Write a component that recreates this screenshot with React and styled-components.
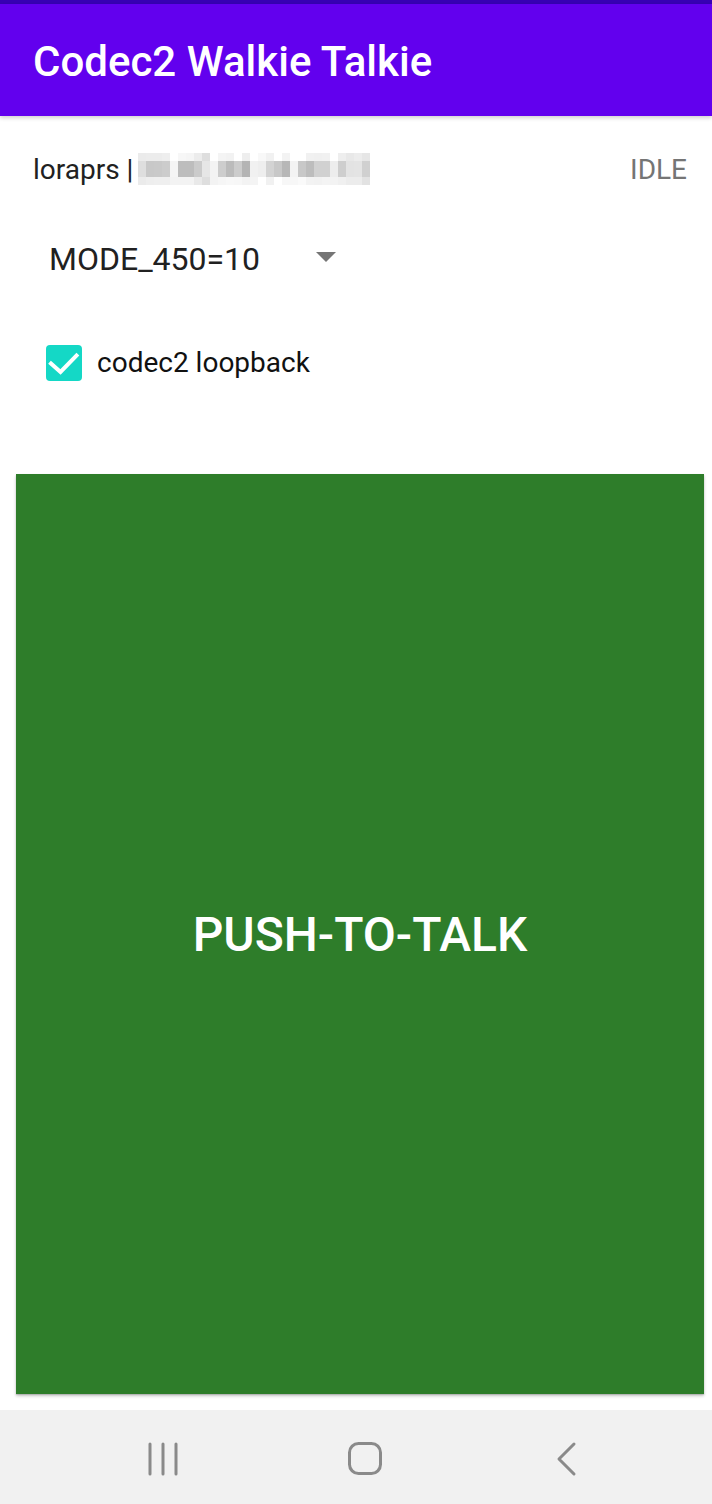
import React from "react";
import styled, { createGlobalStyle } from "styled-components";

const GlobalStyle = createGlobalStyle`
  html, body { margin: 0; padding: 0; background: #ffffff; }
  body { font-family: Roboto, "Noto Sans", "Liberation Sans", sans-serif; }
  * { box-sizing: border-box; }
`;

const Screen = styled.div`
  width: 712px;
  height: 1504px;
  display: flex;
  flex-direction: column;
  background: #ffffff;
  overflow: hidden;
`;

const StatusStrip = styled.div`
  height: 4px;
  background: #3700b3;
  flex: none;
`;

const Toolbar = styled.header`
  height: 112px;
  flex: none;
  background: #6200ee;
  display: flex;
  align-items: center;
  padding: 3px 0 0 33px;
  box-shadow: 0 2px 4px rgba(0, 0, 0, 0.18);
  position: relative;
  z-index: 1;
`;

const Title = styled.h1`
  margin: 0;
  font-family: Roboto, sans-serif;
  font-weight: 500;
  font-size: 42px;
  line-height: 1;
  color: #ffffff;
`;

const Content = styled.main`
  flex: 1;
  display: flex;
  flex-direction: column;
  padding: 0 25px 0 33px;
`;

const StatusRow = styled.div`
  height: 106px;
  display: flex;
  align-items: center;
  justify-content: space-between;
  padding-top: 2px;
`;

const DeviceInfo = styled.div`
  display: flex;
  align-items: center;
  gap: 5px;
`;

const Label = styled.span`
  font-family: Roboto, sans-serif;
  font-size: ${(p) => p.$size || 28}px;
  line-height: 1;
  color: ${(p) => p.$color || "#212121"};
`;

const Redacted = styled.div`
  display: grid;
  grid-template-columns: repeat(29, 8px);
  grid-template-rows: 8px 16px 8px;
  margin-top: -2px;
`;

const Pixel = styled.span`
  background: ${(p) => p.$c};
`;

const SpinnerRow = styled.div`
  height: 74px;
  display: flex;
  align-items: center;
`;

const Spinner = styled.div`
  width: 319px;
  display: flex;
  align-items: center;
  justify-content: space-between;
  padding: 0 16px;
`;

const SpinnerText = styled.span`
  font-family: Roboto, sans-serif;
  font-size: 32px;
  line-height: 1;
  color: #212121;
`;

const Arrow = styled.span`
  width: 0;
  height: 0;
  border-left: 10px solid transparent;
  border-right: 10px solid transparent;
  border-top: 10px solid #757575;
  margin-top: -4px;
`;

const CheckRow = styled.label`
  height: 132px;
  display: flex;
  align-items: center;
  padding-left: 13px;
  padding-top: 2px;
  gap: 15px;
`;

const CheckBox = styled.span`
  width: 36px;
  height: 36px;
  border-radius: 4px;
  background: #14d8c6;
  display: flex;
  align-items: center;
  justify-content: center;
`;

const PttButton = styled.button`
  margin: 46px 8px 16px 16px;
  height: 920px;
  flex: none;
  border: none;
  background: #2e7d2a;
  color: #ffffff;
  font-family: Roboto, sans-serif;
  font-weight: 500;
  font-size: 48px;
  letter-spacing: 0;
  padding: 0;
  box-shadow: 0 2px 3px rgba(0, 0, 0, 0.22), 0 1px 1px rgba(0, 0, 0, 0.12);
`;

const NavBar = styled.nav`
  height: 94px;
  flex: none;
  background: #f1f1f1;
  display: grid;
  grid-template-columns: repeat(3, 202px);
  padding-left: 62px;
  align-items: center;
`;

const NavSlot = styled.div`
  display: flex;
  justify-content: center;
  align-items: center;
  padding-top: 3px;
`;

const pixels = [
  ["#ebebeb", "#dedede", "#ebebeb"],
  ["#ececec", "#c8c8c8", "#eeeeee"],
  ["#ececec", "#c9c9c9", "#efefef"],
  ["#eeeeee", "#cccccc", "#efefef"],
  ["#ffffff", "#f5f5f5", "#f3f3f3"],
  ["#f7f7f7", "#bdbdbd", "#f3f3f3"],
  ["#f5f5f5", "#bdbdbd", "#f3f3f3"],
  ["#ececec", "#cbcbcb", "#e9e9e9"],
  ["#dedede", "#e6e6e6", "#dedede"],
  ["#ffffff", "#f3f3f3", "#f3f3f3"],
  ["#f4f4f4", "#cdcdcd", "#f6f6f6"],
  ["#f2f2f2", "#bbbbbb", "#f8f8f8"],
  ["#ffffff", "#cccccc", "#f7f7f7"],
  ["#eeeeee", "#b4b4b4", "#f3f3f3"],
  ["#ffffff", "#f1f1f1", "#f4f4f4"],
  ["#f8f8f8", "#eeeeee", "#ffffff"],
  ["#f1f1f1", "#d3d3d3", "#f1f1f1"],
  ["#ffffff", "#c8c8c8", "#ffffff"],
  ["#f3f3f3", "#b7b7b7", "#f7f7f7"],
  ["#ffffff", "#f3f3f3", "#f7f7f7"],
  ["#ffffff", "#c8c8c8", "#fafafa"],
  ["#f1f1f1", "#bdbdbd", "#f3f3f3"],
  ["#f0f0f0", "#d1d1d1", "#f2f2f2"],
  ["#f1f1f1", "#d1d1d1", "#f4f4f4"],
  ["#ffffff", "#ededed", "#f3f3f3"],
  ["#eeeeee", "#cecece", "#f0f0f0"],
  ["#e8e8e8", "#e3e3e3", "#ececec"],
  ["#ececec", "#e4e4e4", "#ececec"],
  ["#e6e6e6", "#d0d0d0", "#e2e2e2"],
];

const NAV = "#8a8a8a";

export default function App() {
  const cells = [];
  for (let r = 0; r < 3; r++) {
    for (let c = 0; c < pixels.length; c++) {
      cells.push(<Pixel key={`${r}-${c}`} $c={pixels[c][r]} />);
    }
  }
  return (
    <>
      <GlobalStyle />
      <Screen>
        <StatusStrip />
        <Toolbar>
          <Title>Codec2 Walkie Talkie</Title>
        </Toolbar>
        <Content>
          <StatusRow>
            <DeviceInfo>
              <Label>loraprs |</Label>
              <Redacted>{cells}</Redacted>
            </DeviceInfo>
            <Label $color="#757575">IDLE</Label>
          </StatusRow>
          <SpinnerRow>
            <Spinner>
              <SpinnerText>MODE_450=10</SpinnerText>
              <Arrow />
            </Spinner>
          </SpinnerRow>
          <CheckRow>
            <CheckBox>
              <svg width="36" height="36" viewBox="0 0 36 36">
                <polyline
                  points="5,18.5 14.5,27 30.5,10.5"
                  fill="none"
                  stroke="#ffffff"
                  strokeWidth="4"
                  strokeLinecap="square"
                />
              </svg>
            </CheckBox>
            <Label $color="#111111">codec2 loopback</Label>
          </CheckRow>
        </Content>
        <PttButton>PUSH-TO-TALK</PttButton>
        <NavBar>
          <NavSlot>
            <svg width="34" height="36" viewBox="0 0 34 36">
              <g stroke={NAV} strokeWidth="3" strokeLinecap="round">
                <line x1="4" y1="3" x2="4" y2="33" />
                <line x1="17" y1="3" x2="17" y2="33" />
                <line x1="30" y1="3" x2="30" y2="33" />
              </g>
            </svg>
          </NavSlot>
          <NavSlot>
            <svg width="36" height="36" viewBox="0 0 36 36">
              <rect
                x="2.5"
                y="2.5"
                width="31"
                height="30"
                rx="9"
                fill="none"
                stroke={NAV}
                strokeWidth="3"
              />
            </svg>
          </NavSlot>
          <NavSlot>
            <svg width="24" height="36" viewBox="0 0 24 36">
              <polyline
                points="19,3 4,18 19,33"
                fill="none"
                stroke={NAV}
                strokeWidth="3"
                strokeLinecap="round"
                strokeLinejoin="round"
              />
            </svg>
          </NavSlot>
        </NavBar>
      </Screen>
    </>
  );
}
